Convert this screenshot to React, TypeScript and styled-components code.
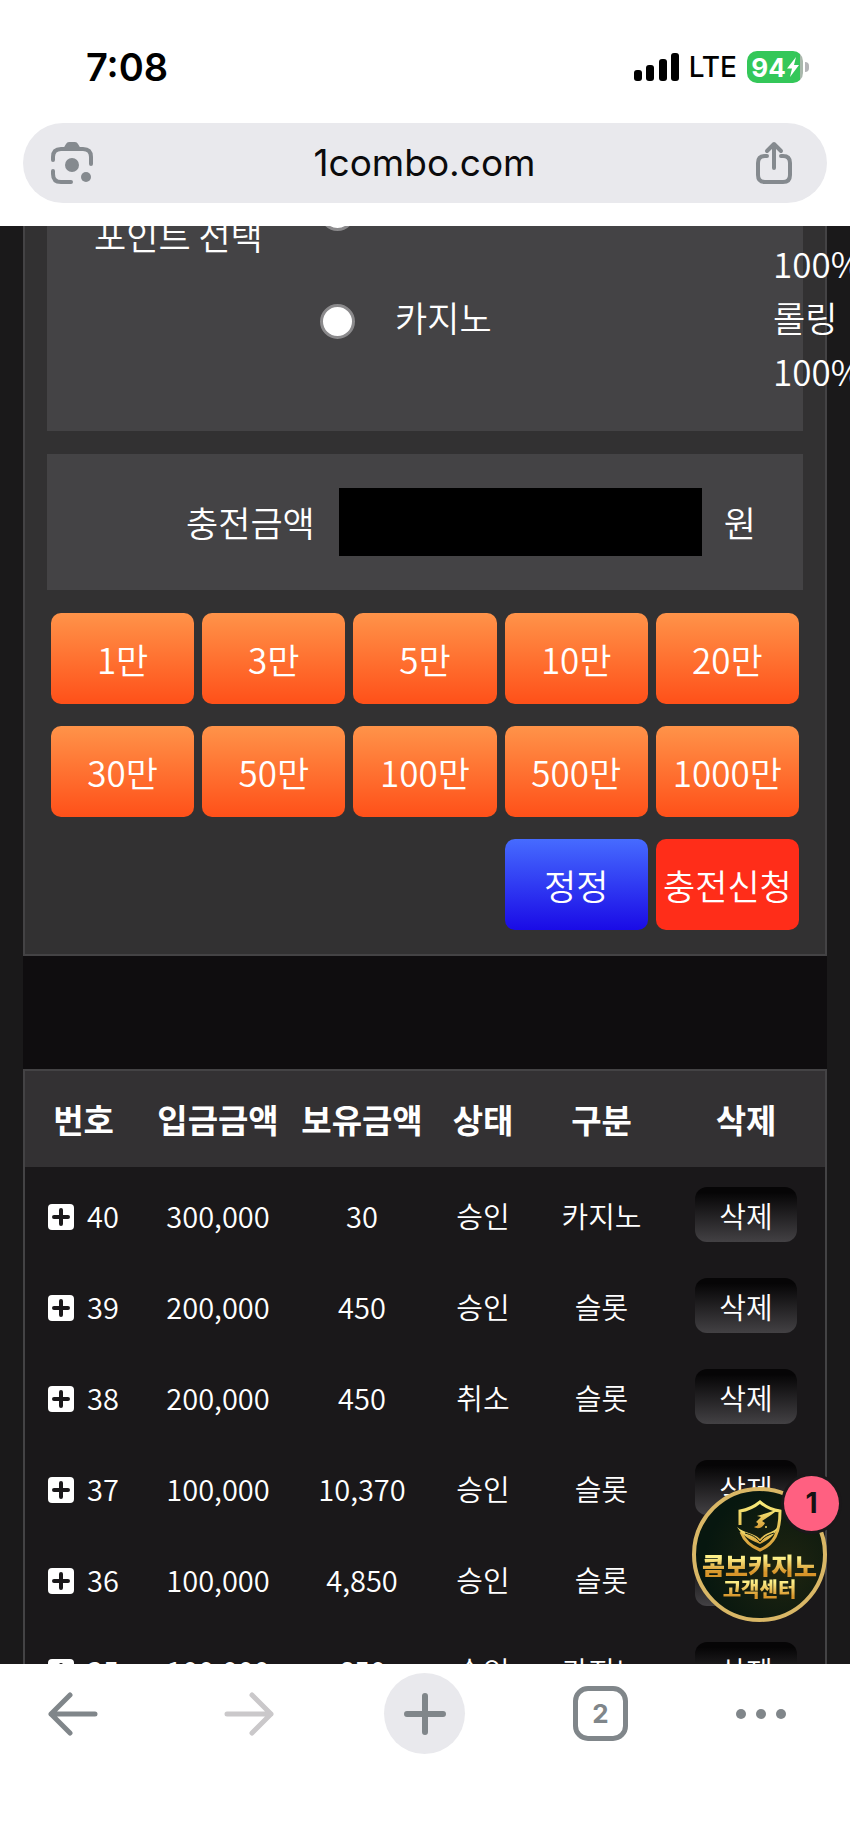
import React from "react";
import styled, { createGlobalStyle, css } from "styled-components";

const SITE_FONT = `"Noto Sans CJK KR", "Noto Sans", sans-serif`;
const SYSTEM_FONT = `Inter, "Liberation Sans", sans-serif`;

const GlobalStyle = createGlobalStyle`
  *, *::before, *::after { box-sizing: border-box; }
  body { margin: 0; background: #fff; }
  button, input { font: inherit; color: inherit; margin: 0; padding: 0; border: 0; }
  button { background: none; cursor: pointer; }
  svg { display: block; flex: none; }
`;

const Screen = styled.div`
  display: flex;
  flex-direction: column;
  height: 100vh;
  overflow: hidden;
  background: #fff;
  font-family: ${SYSTEM_FONT};
`;

const BrowserHeader = styled.header`
  flex: none;
  padding: 44px 23px 23px;
`;

const StatusBar = styled.div`
  display: flex;
  align-items: center;
  justify-content: space-between;
  height: 46px;
  padding: 0 18px 0 63px;
  color: #000;
`;

const Clock = styled.time`
  font-size: 38px;
  font-weight: 600;
  line-height: 46px;
`;

const StatusIcons = styled.div`
  display: flex;
  align-items: center;
`;

const Carrier = styled.span`
  margin: 0 10px 0 9px;
  font-size: 28px;
  font-weight: 500;
`;

const Battery = styled.span`
  display: flex;
  align-items: center;
  justify-content: center;
  gap: 1px;
  width: 56px;
  height: 32px;
  border-radius: 10px;
  background: linear-gradient(90deg, #34c759 94%, #a9b8ac 94%);
  color: #fff;
  font-size: 26px;
  font-weight: 700;
`;

const BatteryCap = styled.span`
  width: 4px;
  height: 10px;
  margin-left: 2px;
  border-radius: 0 4px 4px 0;
  background: #b5b5b8;
`;

const AddressBar = styled.div`
  display: flex;
  align-items: center;
  justify-content: space-between;
  height: 80px;
  margin-top: 33px;
  padding: 0 35px 0 28px;
  border-radius: 40px;
  background: #e9e9ed;
`;

const Address = styled.a`
  color: #0b0b0c;
  font-size: 37px;
  line-height: 46px;
  text-decoration: none;
`;

const IconButton = styled.button`
  display: flex;
  align-items: center;
  justify-content: center;
  color: #858a8f;
`;

const Viewport = styled.main`
  position: relative;
  flex: 1;
  min-height: 0;
  overflow: hidden;
  background: #1a191a;
  color: #fff;
  font-family: ${SITE_FONT};
  font-weight: 350;
`;

const Page = styled.div`
  margin: -99px 23px 0;
  background: #0f0d0f;
`;

const DepositForm = styled.form`
  display: flex;
  flex-direction: column;
  gap: 23px;
  padding: 22px 22px 24px;
  border: 2px solid #444345;
  background: #323132;
  font-size: 35px;
  line-height: 54px;
`;

const panel = css`
  background: #444345;
`;

const PointPanel = styled.div`
  ${panel}
  display: flex;
  padding: 31px 0 33px 47px;
`;

const PointTitle = styled.div`
  flex: none;
  width: 226px;
  padding-top: 26px;
`;

const PointOptions = styled.div`
  flex: 1;
`;

const PointOption = styled.label`
  display: grid;
  grid-template-columns: 35px 1fr 30px;
  column-gap: 40px;
  height: 108px;
`;

const Radio = styled.input`
  appearance: none;
  width: 35px;
  height: 35px;
  margin-top: 14px;
  border: 3px solid #8b8a8c;
  border-radius: 50%;
  background: #fff;
`;

const PointNote = styled.span`
  align-self: end;
  word-break: keep-all;
`;

const AmountPanel = styled.div`
  ${panel}
  display: flex;
  align-items: center;
  justify-content: flex-end;
  padding: 34px 47px;
`;

const AmountInput = styled.input`
  width: 363px;
  height: 68px;
  margin: 0 22px 0 24px;
  background: #000;
`;

const ButtonGrid = styled.div`
  display: grid;
  grid-template-columns: repeat(5, 1fr);
  gap: 22px 8px;
  margin: 0 4px;
`;

const tones = {
  amount: "linear-gradient(#ff9349, #ff5019)",
  reset: "linear-gradient(#466bff, #1a0be6)",
  submit: "#ff2d19",
};

const FormButton = styled.button<{ $tone: keyof typeof tones }>`
  height: 91px;
  border-radius: 10px;
  background: ${(p) => tones[p.$tone]};
  white-space: nowrap;
  ${(p) => p.$tone === "reset" && "grid-column: 4;"}
`;

const History = styled.section`
  margin-top: 113px;
  border: 2px solid #444345;
  background: #1a181a;
`;

const HistoryTable = styled.table`
  width: 100%;
  table-layout: fixed;
  border-collapse: collapse;
  font-size: 29px;
  line-height: 42px;
`;

const Column = styled.col<{ $width: number }>`
  width: ${(p) => p.$width}px;
`;

const HeadCell = styled.th`
  height: 96px;
  padding: 0;
  background: #333133;
  font-size: 33px;
  font-weight: 700;
  white-space: nowrap;
`;

const Cell = styled.td`
  height: 91px;
  padding: 4px 0 0;
  text-align: center;
`;

const NumberBox = styled.div`
  display: flex;
  align-items: center;
  gap: 13px;
  padding-left: 23px;
`;

const ExpandButton = styled.button`
  display: block;
  padding-top: 4px;
`;

const DeleteButton = styled.button`
  display: block;
  width: 102px;
  height: 55px;
  margin: 0 auto;
  border-radius: 12px;
  background: linear-gradient(#060506 10%, #434144);
`;

const SupportButton = styled.button`
  position: absolute;
  right: 23px;
  bottom: 42px;
  width: 135px;
  height: 135px;
  border: 4px solid #d9b766;
  border-radius: 50%;
  background: radial-gradient(circle at 70% 60%, #1f2410, #07170f 70%);
  display: flex;
  flex-direction: column;
  align-items: center;
  padding-top: 8px;
`;

const GoldText = styled.span<{ $size: number }>`
  background: linear-gradient(#fdf08a 20%, #d7952a 80%);
  background-clip: text;
  -webkit-background-clip: text;
  color: transparent;
  font-size: ${(p) => p.$size}px;
  line-height: 24px;
  font-weight: 900;
  white-space: nowrap;
`;

const UnreadBadge = styled.span`
  position: absolute;
  right: -16px;
  top: -15px;
  width: 55px;
  height: 55px;
  border-radius: 50%;
  background: #ff6081;
  box-shadow: 0 0 0 3px #1a181a;
  color: #151213;
  font: 700 28px/55px ${SYSTEM_FONT};
`;

const BrowserNav = styled.nav`
  flex: none;
  display: flex;
  justify-content: space-between;
  padding: 9px 33px 87px 32px;
`;

const NavButton = styled.button<{ $filled?: boolean; $start?: boolean }>`
  display: flex;
  align-items: center;
  justify-content: ${(p) => (p.$start ? "flex-start" : "center")};
  width: 81px;
  height: 81px;
  border-radius: 50%;
  background: ${(p) => (p.$filled ? "#e9e9ed" : "none")};
  color: #80868a;
`;

const TabCount = styled.span`
  width: 55px;
  height: 55px;
  border: 5px solid #80868a;
  border-radius: 15px;
  font-size: 26px;
  font-weight: 700;
  line-height: 45px;
  text-align: center;
`;

const SignalIcon = () => (
  <svg width="46" height="30" viewBox="0 0 46 30" fill="#000" aria-hidden="true">
    <rect x="0" y="18" width="8" height="11" rx="3" />
    <rect x="12" y="13" width="8" height="16" rx="3" />
    <rect x="25" y="7" width="8" height="22" rx="3" />
    <rect x="37" y="1" width="8" height="28" rx="3" />
  </svg>
);

const BoltIcon = () => (
  <svg width="12" height="20" viewBox="0 0 12 20" fill="#fff" aria-hidden="true">
    <path d="M9 0L0 11.500H5L3 20L12 8H7Z" />
  </svg>
);

const LensIcon = () => (
  <svg width="42" height="42" viewBox="0 0 42 42" fill="none" stroke="currentColor" strokeWidth="4" strokeLinecap="round" aria-hidden="true">
    <path d="M2 18V15Q2 7 10 7H32Q40 7 40 15V22" />
    <path d="M2 29V32Q2 40 10 40H20" />
    <path d="M12 7L15 2Q16 0 18 0H24Q26 0 27 2L30 7Z" fill="currentColor" stroke="none" />
    <circle cx="21" cy="23" r="7" fill="currentColor" stroke="none" />
    <circle cx="35" cy="35" r="5" fill="currentColor" stroke="none" />
  </svg>
);

const ShareIcon = () => (
  <svg width="36" height="44" viewBox="0 0 36 44" fill="none" stroke="currentColor" strokeWidth="4" strokeLinecap="round" strokeLinejoin="round" aria-hidden="true">
    <path d="M11 15H9Q2 15 2 22V34Q2 41 9 41H27Q34 41 34 34V22Q34 15 27 15H25" />
    <path d="M18 27V3M11 10L18 3L25 10" />
  </svg>
);

const ExpandIcon = () => (
  <svg width="26" height="26" viewBox="0 0 26 26" aria-hidden="true">
    <rect width="26" height="26" rx="4" fill="#fff" />
    <path d="M13 6V20M6 13H20" stroke="#1a181a" strokeWidth="4" strokeLinecap="round" />
  </svg>
);

const ArrowIcon = ({ forward = false }: { forward?: boolean }) => (
  <svg width="50" height="44" viewBox="0 0 50 44" fill="none" stroke={forward ? "#cac8ca" : "currentColor"} strokeWidth="5" strokeLinecap="round" strokeLinejoin="round" aria-hidden="true">
    {forward ? <path d="M3 22H47M28 3L47 22L28 41" /> : <path d="M47 22H3M22 3L3 22L22 41" />}
  </svg>
);

const PlusIcon = () => (
  <svg width="42" height="42" viewBox="0 0 42 42" stroke="currentColor" strokeWidth="6" strokeLinecap="round" aria-hidden="true">
    <path d="M21 3V39M3 21H39" />
  </svg>
);

const DotsIcon = () => (
  <svg width="50" height="12" viewBox="0 0 50 12" fill="currentColor" aria-hidden="true">
    <circle cx="5" cy="6" r="5" />
    <circle cx="25" cy="6" r="5" />
    <circle cx="45" cy="6" r="5" />
  </svg>
);

const ShieldLogo = () => (
  <svg width="46" height="54" viewBox="0 0 46 54" fill="none" aria-hidden="true">
    <defs>
      <linearGradient id="gold" x1="0" y1="0" x2="0" y2="1">
        <stop offset="0" stopColor="#f8ec7a" />
        <stop offset="1" stopColor="#d59a35" />
      </linearGradient>
    </defs>
    <path d="M3 26V12C10 11 17 8 23 3C29 8 35 11 43 12C43 34 37 45 23 51C13 47 7 41 4 33" stroke="url(#gold)" strokeWidth="3" />
    <path d="M0 28C8 35 16 33 23 40C29 33 36 34 41 28C37 38 29 42 23 45C16 42 6 38 0 28Z" fill="url(#gold)" />
    <path d="M8 34C15 36 19 38 23 43C27 38 31 36 37 34" stroke="#07170f" strokeWidth="1" />
    <path d="M20 17L30 14L42 10L34 16L25 22L28 24C25 30 20 30 17 28C22 27 22 24 19 23L24 18Z" fill="url(#gold)" />
    <circle cx="29" cy="28" r="1" fill="#f1d76a" />
  </svg>
);

const amounts = ["1만", "3만", "5만", "10만", "20만", "30만", "50만", "100만", "500만", "1000만"];

const columns = [
  { title: "번호", width: 117 },
  { title: "입금금액", width: 152 },
  { title: "보유금액", width: 136 },
  { title: "상태", width: 106 },
  { title: "구분", width: 131 },
  { title: "삭제", width: 158 },
];

const deposits = [
  { id: 40, amount: "300,000", balance: "30", status: "승인", kind: "카지노" },
  { id: 39, amount: "200,000", balance: "450", status: "승인", kind: "슬롯" },
  { id: 38, amount: "200,000", balance: "450", status: "취소", kind: "슬롯" },
  { id: 37, amount: "100,000", balance: "10,370", status: "승인", kind: "슬롯" },
  { id: 36, amount: "100,000", balance: "4,850", status: "승인", kind: "슬롯" },
  { id: 35, amount: "100,000", balance: "650", status: "승인", kind: "카지노" },
];

export default function App() {
  return (
    <Screen>
      <GlobalStyle />
      <BrowserHeader>
        <StatusBar>
          <Clock>7:08</Clock>
          <StatusIcons>
            <SignalIcon />
            <Carrier>LTE</Carrier>
            <Battery>
              94
              <BoltIcon />
            </Battery>
            <BatteryCap />
          </StatusIcons>
        </StatusBar>
        <AddressBar>
          <IconButton type="button" aria-label="Lens">
            <LensIcon />
          </IconButton>
          <Address href="#">1combo.com</Address>
          <IconButton type="button" aria-label="Share">
            <ShareIcon />
          </IconButton>
        </AddressBar>
      </BrowserHeader>

      <Viewport>
        <Page>
          <DepositForm onSubmit={(e) => e.preventDefault()}>
            <PointPanel role="radiogroup" aria-labelledby="point-title">
              <PointTitle id="point-title">포인트 선택</PointTitle>
              <PointOptions>
                <PointOption>
                  <Radio type="radio" name="point" aria-label="슬롯" />
                  <span />
                  <PointNote>100%</PointNote>
                </PointOption>
                <PointOption>
                  <Radio type="radio" name="point" />
                  <span>카지노</span>
                  <PointNote>롤링 100%</PointNote>
                </PointOption>
              </PointOptions>
            </PointPanel>
            <AmountPanel>
              <label htmlFor="amount">충전금액</label>
              <AmountInput id="amount" type="text" inputMode="numeric" />
              <span>원</span>
            </AmountPanel>
            <ButtonGrid>
              {amounts.map((amount) => (
                <FormButton key={amount} type="button" $tone="amount">
                  {amount}
                </FormButton>
              ))}
              <FormButton type="reset" $tone="reset">정정</FormButton>
              <FormButton type="submit" $tone="submit">충전신청</FormButton>
            </ButtonGrid>
          </DepositForm>

          <History>
            <HistoryTable>
              <colgroup>
                {columns.map((c) => (
                  <Column key={c.title} $width={c.width} />
                ))}
              </colgroup>
              <thead>
                <tr>
                  {columns.map((c) => (
                    <HeadCell key={c.title} scope="col">{c.title}</HeadCell>
                  ))}
                </tr>
              </thead>
              <tbody>
                {deposits.map((d) => (
                  <tr key={d.id}>
                    <Cell>
                      <NumberBox>
                        <ExpandButton type="button" aria-label={`${d.id}`}>
                          <ExpandIcon />
                        </ExpandButton>
                        {d.id}
                      </NumberBox>
                    </Cell>
                    <Cell>{d.amount}</Cell>
                    <Cell>{d.balance}</Cell>
                    <Cell>{d.status}</Cell>
                    <Cell>{d.kind}</Cell>
                    <Cell>
                      <DeleteButton type="button">삭제</DeleteButton>
                    </Cell>
                  </tr>
                ))}
              </tbody>
            </HistoryTable>
          </History>
        </Page>
        <SupportButton type="button">
          <ShieldLogo />
          <GoldText $size={25}>콤보카지노</GoldText>
          <GoldText $size={20}>고객센터</GoldText>
          <UnreadBadge>1</UnreadBadge>
        </SupportButton>
      </Viewport>

      <BrowserNav>
        <NavButton type="button" aria-label="Back">
          <ArrowIcon />
        </NavButton>
        <NavButton type="button" aria-label="Forward">
          <ArrowIcon forward />
        </NavButton>
        <NavButton type="button" aria-label="New tab" $filled>
          <PlusIcon />
        </NavButton>
        <NavButton type="button" aria-label="Tabs">
          <TabCount>2</TabCount>
        </NavButton>
        <NavButton type="button" aria-label="Menu" $start>
          <DotsIcon />
        </NavButton>
      </BrowserNav>
    </Screen>
  );
}
